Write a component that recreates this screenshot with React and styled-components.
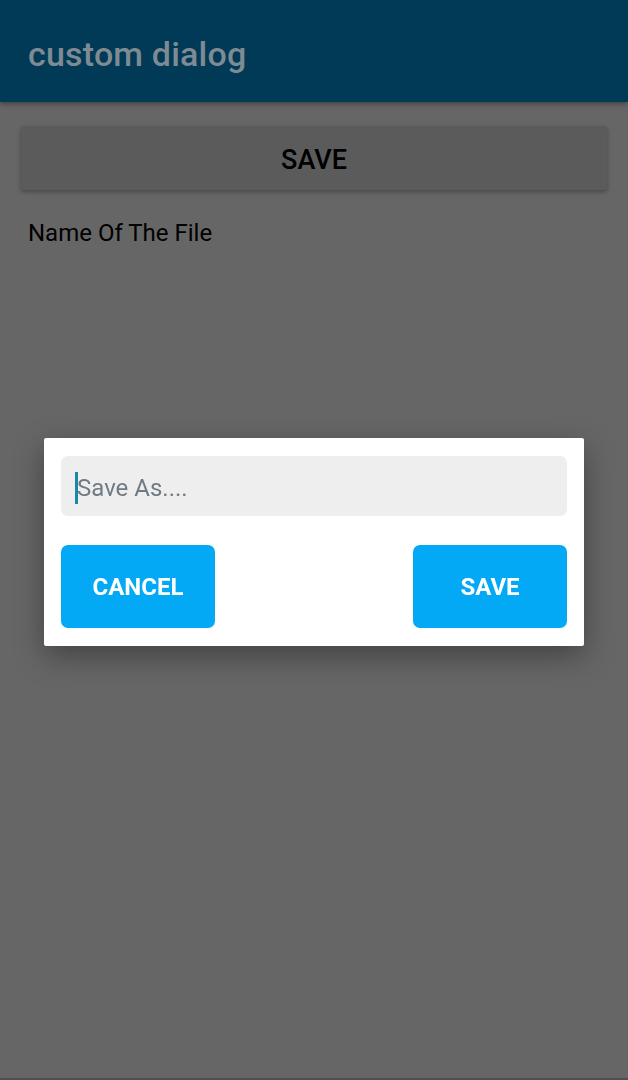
import React from 'react'
import styled, { createGlobalStyle } from 'styled-components'

const Global = createGlobalStyle`
  html, body {
    margin: 0;
    padding: 0;
    background: #666666;
    font-family: Roboto, "Noto Sans", sans-serif;
  }
`;

const Page = styled.div`
  min-height: 1080px;
  background: #666666;
  display: flex;
  flex-direction: column;
  border-bottom: 2px solid #4f4f4f;
  box-sizing: border-box;
`;

const Toolbar = styled.div`
  height: 102px;
  box-sizing: border-box;
  padding: 6px 0 0 28px;
  background: #003a57;
  display: flex;
  align-items: center;
  box-shadow: 0 2px 5px rgba(0, 0, 0, 0.35);
  position: relative;
  z-index: 1;
`;

const Title = styled.h1`
  margin: 0;
  font-size: 34px;
  font-weight: 500;
  color: #7e8b93;
  letter-spacing: 0.2px;
`;

const Content = styled.div`
  padding: 24px 21px 0;
  display: flex;
  flex-direction: column;
`;

const WideButton = styled.button`
  height: 64px;
  padding-top: 4px;
  border: none;
  border-radius: 3px;
  background: #5b5b5b;
  color: #000;
  font-family: Roboto, sans-serif;
  font-size: 27px;
  font-weight: 500;
  box-shadow: 0 2px 4px rgba(0, 0, 0, 0.3);
`;

const Label = styled.div`
  margin-top: 29px;
  padding-left: 7px;
  font-size: 24px;
  color: #000;
`;

const Dialog = styled.div`
  position: fixed;
  left: 44px;
  top: 438px;
  width: 540px;
  box-sizing: border-box;
  padding: 18px 17px;
  background: #fff;
  border-radius: 2px;
  box-shadow: 0 10px 30px rgba(0, 0, 0, 0.35);
  display: flex;
  flex-direction: column;
  gap: 29px;
`;

const Field = styled.div`
  height: 60px;
  box-sizing: border-box;
  padding: 3px 0 0 14px;
  background: #eeeeee;
  border-radius: 7px;
  display: flex;
  align-items: center;
  font-size: 24px;
  color: #6f7c85;
`;

const Caret = styled.span`
  display: inline-block;
  width: 3px;
  height: 32px;
  background: #1a86a8;
  margin-right: -1px;
`;

const Actions = styled.div`
  display: flex;
  justify-content: space-between;
`;

const ActionButton = styled.button`
  width: 154px;
  height: 83px;
  padding-top: 2px;
  border: none;
  border-radius: 7px;
  background: #03a9f4;
  color: #fff;
  font-family: Roboto, sans-serif;
  font-size: 24px;
  font-weight: 700;
`;

export default function App() {
  return (
    <>
      <Global />
      <Page>
        <Toolbar>
          <Title>custom dialog</Title>
        </Toolbar>
        <Content>
          <WideButton>SAVE</WideButton>
          <Label>Name Of The File</Label>
        </Content>
      </Page>
      <Dialog>
        <Field>
          <Caret />
          Save As....
        </Field>
        <Actions>
          <ActionButton>CANCEL</ActionButton>
          <ActionButton>SAVE</ActionButton>
        </Actions>
      </Dialog>
    </>
  )
}
